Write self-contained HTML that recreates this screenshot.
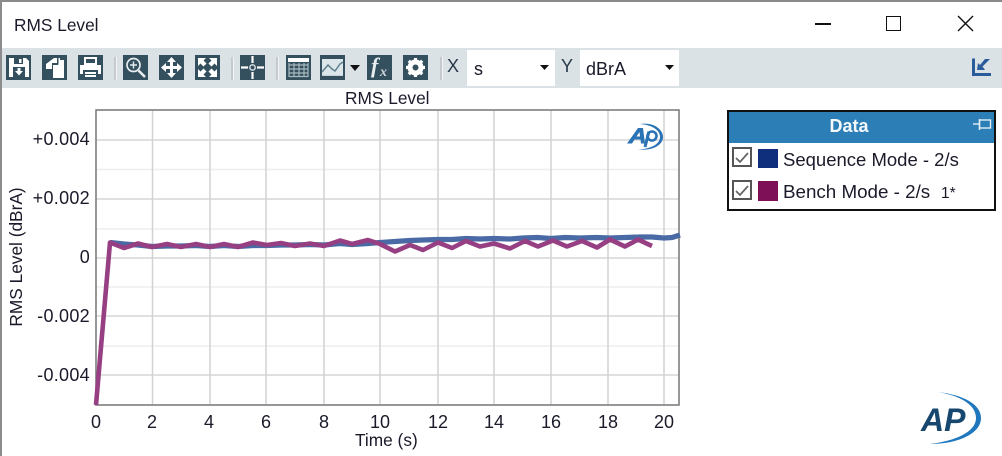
<!DOCTYPE html>
<html><head><meta charset="utf-8">
<style>
html,body{margin:0;padding:0;background:#fff}
body{width:1002px;height:456px;overflow:hidden;position:relative;font-family:"Liberation Sans",sans-serif;color:#1a1a2a}
.a{position:absolute;white-space:nowrap}
.ib{position:absolute;top:55px;width:25px;height:25px;background:#34505f}
.ib svg{display:block}
.sep{position:absolute;top:57px;width:2px;height:23px;background:#c4cacd;border-right:1px solid #f2f4f5}
.yl{position:absolute;right:912px;font-size:18px;line-height:18px;letter-spacing:.3px}
.xl{position:absolute;top:413px;font-size:18px;line-height:18px;width:30px;text-align:center}
.cb{position:absolute;left:732px;width:16px;height:16px;border:2px solid #555;background:#fff}
</style></head><body>
<div class="a" style="left:0;top:0;width:1002px;height:2px;background:#8a8a8a"></div>
<div class="a" style="left:0;top:0;width:2px;height:456px;background:#8c8c8c"></div>
<div class="a" style="left:14px;top:15px;font-size:17.300px;line-height:20px">RMS Level</div>

<div class="a" style="left:815px;top:23px;width:16px;height:2px;background:#111"></div>
<div class="a" style="left:886px;top:16px;width:13px;height:13px;border:1.500px solid #111"></div>
<svg class="a" style="left:957px;top:15px" width="17" height="17" fill="none" stroke="#111" stroke-width="1.400"><path d="M1 1L16 16M16 1L1 16"/></svg>

<div class="a" style="left:2px;top:48px;width:1000px;height:40px;background:#dbe2e6"></div>

<div class="ib" style="left:6px"><svg width="25" height="25"><path d="M3 3H20L23 6V22H3Z" fill="#fff"/><rect x="8" y="3" width="9" height="6" fill="#34505f"/><rect x="13" y="4" width="2.500" height="4" fill="#fff"/><rect x="7" y="12" width="12" height="10" fill="#34505f"/><path d="M11.500 13H14.500V16H17L13 20.500L9 16H11.500Z" fill="#fff"/></svg></div>
<div class="ib" style="left:42px"><svg width="25" height="25"><path d="M12 3H15V8H10V14H4V9Z" fill="#fff"/><path d="M11 10H16V3H18V5H22V23H11Z" fill="#fff"/><path d="M16 3V9H11" stroke="#34505f" fill="none"/></svg></div>
<div class="ib" style="left:78px"><svg width="25" height="25"><path d="M7 3H18V9H7Z" fill="none" stroke="#fff" stroke-width="2"/><path d="M2 10H23V19H20V15H5V19H2Z" fill="#fff"/><rect x="7" y="17" width="11" height="5" fill="#fff"/><rect x="6" y="19" width="13" height="1" fill="#34505f"/></svg></div>
<div class="sep" style="left:114px"></div>
<div class="ib" style="left:123px"><svg width="25" height="25" fill="none" stroke="#e6ecef"><circle cx="10.500" cy="10" r="6.500" stroke-width="1.700"/><path d="M7 10H14M10.500 6.500V13.500" stroke-width="1.400"/><path d="M15.500 15.500L22 22" stroke-width="2.600"/></svg></div>
<div class="ib" style="left:159px"><svg width="25" height="25" fill="#fff"><path d="M11 7H14V11H18V8L23 12.500L18 17V14H14V18H17L12.500 23L8 18H11V14H7V17L2 12.500L7 8V11H11V7H8L12.500 2L17 7H14Z"/></svg></div>
<div class="ib" style="left:195px"><svg width="25" height="25" fill="#fff"><path d="M3 3H11L8.500 5.500L11.500 8.500L8.500 11.500L5.500 8.500L3 11Z"/><path d="M22 3V11L19.500 8.500L16.500 11.500L13.500 8.500L16.500 5.500L14 3Z"/><path d="M3 22V14L5.500 16.500L8.500 13.500L11.500 16.500L8.500 19.500L11 22Z"/><path d="M22 22H14L16.500 19.500L13.500 16.500L16.500 13.500L19.500 16.500L22 14Z"/></svg></div>
<div class="sep" style="left:231px"></div>
<div class="ib" style="left:240px"><svg width="25" height="25"><path d="M12.500 1V8M12.500 17V24M1 12.500H8M17 12.500H24" stroke="#fff" stroke-width="2.200"/><circle cx="12.500" cy="12.500" r="2.700" fill="none" stroke="#dfe6ea" stroke-width="1.400"/></svg></div>
<div class="sep" style="left:276px"></div>
<div class="ib" style="left:286px"><svg width="25" height="25"><rect x="2" y="3" width="21" height="4" fill="#fff"/><path d="M3 10H22M3 14H22M3 18H22M3 21.500H22M3 8V22M8 8V22M13 8V22M18 8V22M22 8V22" stroke="#a9babf" stroke-width="1.200" fill="none"/></svg></div>
<div class="ib" style="left:320px"><svg width="25" height="25"><rect x="2" y="4" width="21" height="16" fill="#dbe6ea"/><path d="M2 17L8 10L12 14L15 16L20 9L23 7" fill="none" stroke="#5f7f8e" stroke-width="1.500"/><rect x="2" y="20" width="21" height="1" fill="#c6d2d8"/></svg></div>
<svg class="a" style="left:350px;top:65px" width="11" height="7"><path d="M0 0H10L5 6Z" fill="#111"/></svg>
<div class="ib" style="left:367px"><svg width="25" height="25"><text x="4" y="18" font-family="Liberation Serif,serif" font-style="italic" font-weight="700" font-size="22" fill="#e8edef">f</text><text x="13" y="21" font-family="Liberation Serif,serif" font-style="italic" font-weight="700" font-size="14" fill="#cfd9de">x</text></svg></div>
<div class="ib" style="left:403px"><svg width="25" height="25"><circle cx="12.500" cy="12.500" r="5.500" fill="none" stroke="#fff" stroke-width="5"/><path d="M12.500 3V7M12.500 18V22M3 12.500H7M18 12.500H22M5.800 5.800L8.500 8.500M16.500 16.500L19.200 19.200M5.800 19.200L8.500 16.500M16.500 8.500L19.200 5.800" stroke="#fff" stroke-width="3.200"/></svg></div>
<div class="sep" style="left:440px"></div>
<div class="a" style="left:447px;top:56px;font-size:18px;line-height:20px;color:#27384a">X</div>
<div class="a" style="left:467px;top:50px;width:88px;height:36px;background:#fff"></div>
<div class="a" style="left:474px;top:59px;font-size:18px;line-height:20px">s</div>
<svg class="a" style="left:540px;top:65px" width="10" height="6"><path d="M0 0H9L4.500 5Z" fill="#111"/></svg>
<div class="a" style="left:561px;top:56px;font-size:18px;line-height:20px;color:#27384a">Y</div>
<div class="a" style="left:580px;top:50px;width:99px;height:36px;background:#fff"></div>
<div class="a" style="left:586px;top:59px;font-size:18px;line-height:20px">dBrA</div>
<svg class="a" style="left:665px;top:65px" width="10" height="6"><path d="M0 0H9L4.500 5Z" fill="#111"/></svg>
<svg class="a" style="left:970px;top:56px" width="24" height="24" fill="none" stroke="#2a5b9a"><path d="M3.500 2.500V18.500H21" stroke-width="3"/><path d="M7 14L8 7L10 9L15 3H20L12.500 10.500L15 14Z" fill="#2a5b9a" stroke="none"/></svg>

<div class="a" style="left:345px;top:88px;font-size:17.300px;line-height:20px">RMS Level</div>

<svg class="a" style="left:0;top:0" width="690" height="420">
<g stroke="#eeeeee" stroke-width="1.500"><path d="M96 169.500H679M96 229H679M96 287H679M96 346H679"/></g>
<g stroke="#d6d6d6" stroke-width="1.500"><path d="M96 140H679M96 199H679M96 258H679M96 316H679M96 375H679"/></g>
<g stroke="#d2d2d2" stroke-width="1.500"><path d="M152.500 110V405M210 110V405M266 110V405M324 110V405M380 110V405M438 110V405M494 110V405M551 110V405M608 110V405M664 110V405"/></g>
<rect x="96" y="110" width="583" height="295" fill="none" stroke="#7d7d7d" stroke-width="1.600"/>
<polyline fill="none" stroke="#4a6aa5" stroke-width="5.200" stroke-linejoin="round" points="110,242.500 124,244 138,245 152,246.500 167,246 181,246 196,245.500 210,246.500 224,245.500 238,246.500 253,245.500 267,245.500 281,245 295,245 310,244.500 324,245 340,243.500 352,244.500 368,243.500 380,242.500 395,241.500 410,240.500 423,240 438,239.500 452,239.500 466,238.500 480,239 494,238.500 510,239 523,238 537,237.500 551,238.500 565,237.500 580,238 596,237.500 610,238 625,237.500 640,237 652,237 664,238 672,237.500 680,235"/>
<polyline fill="none" stroke="#963f82" stroke-width="4.600" stroke-linejoin="round" points="96,405 110,242.500 124,248 138,243.500 152,247 167,244 181,247 196,244 210,247 224,244 238,247 253,242.500 267,245 281,243 295,246 310,243.500 324,246 340,240.500 352,244 368,240 380,244 395,251.500 410,245 423,250 438,242.500 452,248 466,241 480,246.500 494,243.500 510,248.500 525,241 538,246.500 553,240.500 567,246.500 582,241 597,247.500 610,239.500 625,246.500 638,239.500 652,246"/>
<g fill="#2a73b5">
<path fill-rule="evenodd" d="M627 143.500L638 128H643L645 143.500H641L640.500 139.500H634.500L632 143.500ZM636.500 136.500H640L639.500 132Z"/>
<path d="M649 131.500L645 147" fill="none" stroke="#2a73b5" stroke-width="3"/>
<circle cx="652" cy="136" r="4.500" fill="none" stroke="#2a73b5" stroke-width="2.600"/>
<path d="M640 124C653 122 663 129 663 137C663 145 653 151 638 149.500C651 149 660 144 660 137C660 130 652 125 640 124Z"/>
</g>
</svg>

<div class="yl" style="top:130px">+0.004</div>
<div class="yl" style="top:189px">+0.002</div>
<div class="yl" style="top:248px">0</div>
<div class="yl" style="top:307px">-0.002</div>
<div class="yl" style="top:366px">-0.004</div>
<div class="xl" style="left:81px">0</div>
<div class="xl" style="left:137px">2</div>
<div class="xl" style="left:194px">4</div>
<div class="xl" style="left:251px">6</div>
<div class="xl" style="left:309px">8</div>
<div class="xl" style="left:365px">10</div>
<div class="xl" style="left:423px">12</div>
<div class="xl" style="left:479px">14</div>
<div class="xl" style="left:536px">16</div>
<div class="xl" style="left:593px">18</div>
<div class="xl" style="left:649px">20</div>
<div class="a" style="left:355px;top:431px;font-size:17.300px;line-height:18px">Time (s)</div>
<div class="a" style="left:-59px;top:247px;width:150px;text-align:center;font-size:17.300px;line-height:20px;transform:rotate(-90deg)">RMS Level (dBrA)</div>

<div class="a" style="left:727px;top:110px;width:265px;height:97px;border:2px solid #111;background:#fff"></div>
<div class="a" style="left:729px;top:112px;width:265px;height:31px;background:#2b7eb6"></div>
<div class="a" style="left:728px;top:116px;width:242px;text-align:center;font-size:18px;line-height:20px;font-weight:700;color:#f4f8fb">Data</div>
<svg class="a" style="left:972px;top:118px" width="20" height="14" fill="none" stroke="#e4eef5" stroke-width="1.400"><path d="M1 6H7"/><rect x="7.500" y="2" width="11" height="8"/><path d="M7.500 1V12"/></svg>
<div class="cb" style="top:147px"></div>
<svg class="a" style="left:732px;top:147px" width="20" height="20" fill="none" stroke="#666" stroke-width="1.800"><path d="M4 11L8 15L16 6"/></svg>
<div class="cb" style="top:180px"></div>
<svg class="a" style="left:732px;top:180px" width="20" height="20" fill="none" stroke="#666" stroke-width="1.800"><path d="M4 11L8 15L16 6"/></svg>
<div class="a" style="left:758px;top:149px;width:20px;height:19px;background:#0f2f7d"></div>
<div class="a" style="left:758px;top:181px;width:20px;height:20px;background:#7d1057"></div>
<div class="a" style="left:783px;top:150px;font-size:18.500px;line-height:20px">Sequence Mode - 2/s</div>
<div class="a" style="left:783px;top:182px;font-size:18.800px;line-height:20px">Bench Mode - 2/s</div>
<div class="a" style="left:941px;top:185px;font-size:15.500px;line-height:18px">1*</div>

<svg class="a" style="left:915px;top:388px" width="70" height="64">
<text x="6" y="43" font-family="Liberation Sans,sans-serif" font-style="italic" font-weight="700" font-size="32" fill="#17466f">AP</text>
<path d="M23 4C48 7 66 16 66 30C66 46 42 56 15 56C40 53 61 44 61 30C61 17 46 8 23 4Z" fill="#1f78bd"/>
</svg>
</body></html>
